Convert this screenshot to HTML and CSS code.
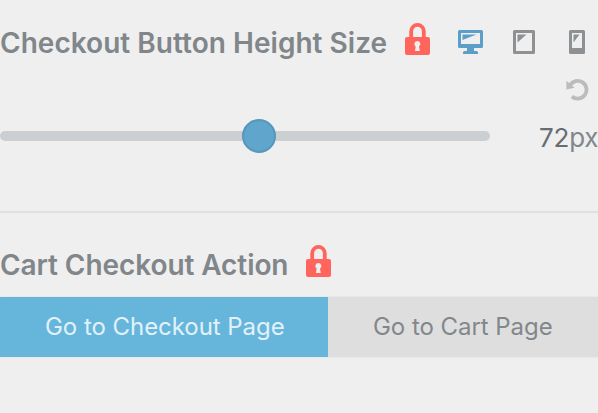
FILE: index.html
```html
<!DOCTYPE html>
<html lang="en">
<head>
<meta charset="utf-8">
<title>Checkout settings</title>
<link rel="stylesheet" href="styles.css">
</head>
<body>
<svg class="defs" aria-hidden="true">
  <symbol id="lock" viewBox="0 0 25 32">
    <path d="M6.2 15V8.200a6.3 6.3 0 0 1 12.6 0V15" fill="none" stroke="currentColor" stroke-width="3.8"/>
    <path fill="currentColor" fill-rule="evenodd" d="M2 14h21a2 2 0 0 1 2 2v14a2 2 0 0 1-2 2H2a2 2 0 0 1-2-2V16a2 2 0 0 1 2-2zM12.3 18a3 3 0 0 0-1.6 5.500L10 28h4.800l-.8-4.500A3 3 0 0 0 12.300 18z"/>
  </symbol>
</svg>
<section class="control">
  <header class="heading">
    <h2 class="title title-size">Checkout Button Height Size</h2>
    <svg class="lock"><use href="#lock"/></svg>
    <div class="devices">
      <svg class="active" width="25" height="24" viewBox="0 0 25 24" fill="currentColor"><path fill-rule="evenodd" d="M1.500 0h22A1.500 1.500 0 0 1 25 1.500v15a1.500 1.500 0 0 1-1.500 1.500H16v3h2.500a1.500 1.500 0 0 1 1.500 1.500V24H5v-1.500A1.500 1.500 0 0 1 6.500 21H9v-3H1.500A1.500 1.500 0 0 1 0 16.500v-15A1.500 1.500 0 0 1 1.500 0zM3 3v11h19V3z"/><path d="M4.500 4.500h14L4.500 10z"/></svg>
      <svg class="tablet" width="22" height="24" viewBox="0 0 22 24" fill="currentColor"><path fill-rule="evenodd" d="M1.500 0h19A1.500 1.500 0 0 1 22 1.500v21a1.500 1.500 0 0 1-1.500 1.500h-19A1.500 1.500 0 0 1 0 22.500v-21A1.500 1.500 0 0 1 1.500 0zM3 3v18h16V3z"/><path d="M4.500 4.500h9l-9 8z"/></svg>
      <svg class="phone" width="16" height="24" viewBox="0 0 16 24" fill="currentColor"><path fill-rule="evenodd" d="M1.500 0h13A1.500 1.500 0 0 1 16 1.500v21a1.500 1.500 0 0 1-1.500 1.500h-13A1.500 1.500 0 0 1 0 22.500v-21A1.500 1.500 0 0 1 1.500 0zM3 3v15h10V3z"/><path d="M4.500 4.500h6l-6 8z"/></svg>
    </div>
  </header>
  <div class="reset-row">
    <svg width="23" height="23" viewBox="0 0 23 23"><path d="M4 7.200A8.900 8.900 0 1 1 5.800 18.500" fill="none" stroke="currentColor" stroke-width="3.800"/><path d="M.4 2.800v8.600l8.200-1.700z" fill="currentColor"/></svg>
  </div>
  <div class="slider-row">
    <div class="track"><span class="thumb"></span></div>
    <div class="value">72<span class="unit">px</span></div>
  </div>
</section>
<section class="control action">
  <header class="heading">
    <h2 class="title title-action">Cart Checkout Action</h2>
    <svg class="lock"><use href="#lock"/></svg>
  </header>
  <div class="choices">
    <div class="choice selected"><span>Go to Checkout Page</span></div>
    <div class="choice"><span>Go to Cart Page</span></div>
  </div>
</section>
</body>
</html>
```
FILE: styles.css
```css
* { box-sizing: border-box; }
body {
  margin: 0;
  height: 413px;
  overflow: hidden;
  background: #efefef;
  color: #82878c;
  font-family: Inter, "Liberation Sans", sans-serif;
}
svg { display: block; flex: none; }
.defs { display: none; }
.control { height: 213px; padding-top: 23px; border-bottom: 2px solid #e0e0e0; }
.heading { display: flex; height: 32px; align-items: flex-start; }
.title {
  flex: none;
  margin: 0;
  line-height: 40px;
  font-size: 28px;
  font-weight: 600;
  color: #80868a;
  white-space: nowrap;
}
.title-size { width: 405px; letter-spacing: 0.03px; }
.title-action { width: 305.5px; letter-spacing: -0.08px; }
.lock { width: 25px; height: 32px; color: #ff645d; }
.devices { display: flex; padding: 7px 0 0 28px; color: #8e9193; }
.active { color: #5b9fc8; }
.tablet { margin-left: 30px; }
.phone { margin-left: 34px; }
.reset-row { display: flex; justify-content: flex-end; padding: 23px 9px 0 0; color: #bbbcbd; }
.slider-row { display: flex; align-items: center; height: 34px; margin-top: 18px; }
.track { display: flex; align-items: center; width: 490px; height: 10px; border-radius: 5px; background: #cbcfd2; flex: none; }
.thumb { width: 34px; height: 34px; margin-left: 242px; border: 2px solid #5796bd; border-radius: 50%; background: #60a5cc; }
.value { margin: 3px 0 0 49px; font-size: 26px; letter-spacing: -0.2px; line-height: 34px; color: #676d71; }
.unit { color: #82878c; }
.action { height: 200px; padding-top: 32px; border: 0; }
.choices { display: grid; grid-template-columns: 328px 1fr; height: 60px; margin-top: 20px; box-shadow: 0 0 2px #d9d9d9; }
.choice { display: flex; align-items: center; padding: 0 0 2px 45px; background: #dedede; font-size: 24px; letter-spacing: -0.05px; white-space: nowrap; }
.selected { background: #66b6dc; color: #e2f1f9; }
```
